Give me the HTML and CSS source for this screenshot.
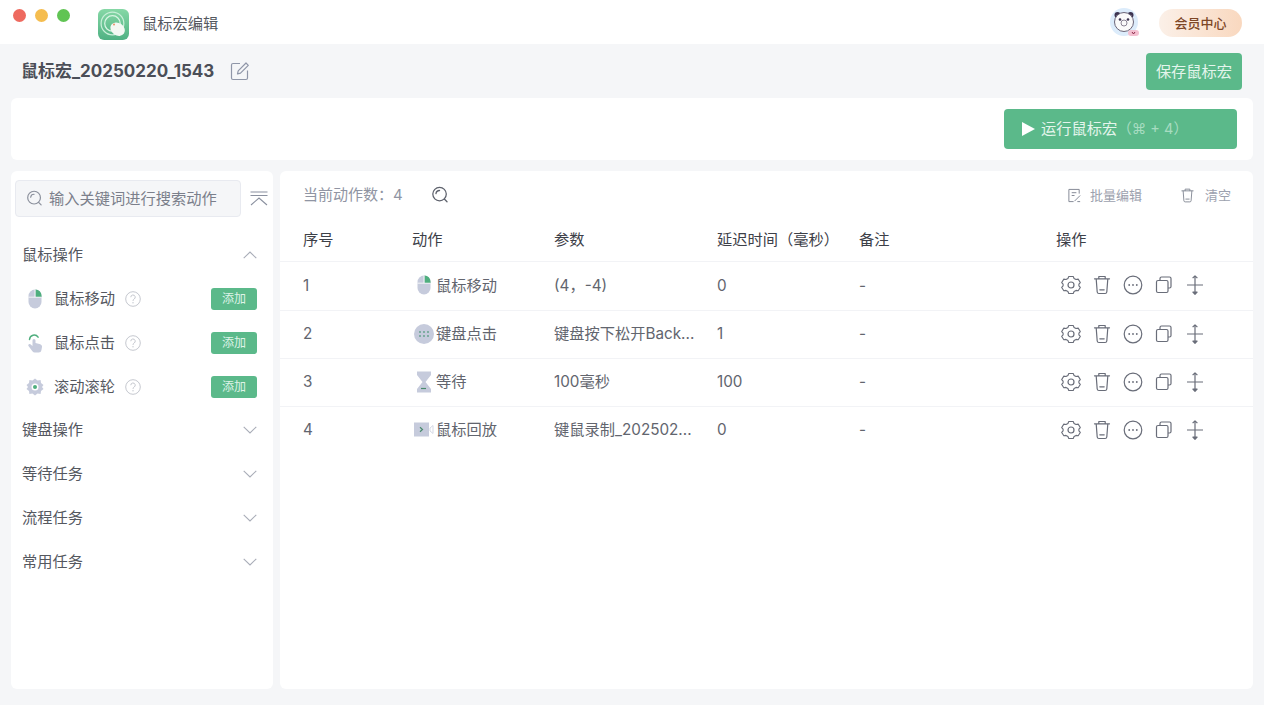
FILE: index.html
```html
<!DOCTYPE html>
<html lang="zh">
<head>
<meta charset="utf-8">
<title>鼠标宏编辑</title>
<link rel="stylesheet" href="styles.css">
</head>
<body>
<svg class="defs" width="0" height="0">
  <symbol id="i-gear" viewBox="0 0 20 20"><path d="M7.600 1.800h4.800l.9 2.100 2.100 1.200 2.300-.4 2.300 3.600-1.500 1.700 0 1.900 1.500 1.700-2.300 3.600-2.300-.4-2.100 1.200-.9 2.100H7.600l-.9-2.100-2.100-1.200-2.300.4L0 13.600l1.500-1.700V10L0 8.300l2.300-3.600 2.300.4 2.100-1.200z" transform="translate(.7 -.2) scale(.93)" fill="none" stroke="currentColor" stroke-width="1.200" stroke-linejoin="round"/><circle cx="10" cy="10" r="3" fill="none" stroke="currentColor" stroke-width="1.200"/></symbol>
  <symbol id="i-trash" viewBox="0 0 20 20"><path d="M2.500 3.800h15M6.800 3.600V1.500h6.400v2.100M4.200 4l1 13a1.700 1.700 0 0 0 1.700 1.500h6.200a1.700 1.700 0 0 0 1.700-1.500l1-13M7.800 14.800h4.400" fill="none" stroke="currentColor" stroke-width="1.200" stroke-linecap="round" stroke-linejoin="round"/></symbol>
  <symbol id="i-more" viewBox="0 0 20 20"><circle cx="10" cy="10" r="8.800" fill="none" stroke="currentColor" stroke-width="1.200"/><circle cx="6.200" cy="10" r=".9" fill="currentColor"/><circle cx="10" cy="10" r=".9" fill="currentColor"/><circle cx="13.800" cy="10" r=".9" fill="currentColor"/></symbol>
  <symbol id="i-copy" viewBox="0 0 20 20"><path d="M6 5V3.500A1.500 1.500 0 0 1 7.500 2h8A1.500 1.500 0 0 1 17 3.500v8a1.500 1.500 0 0 1-1.500 1.500H14" fill="none" stroke="currentColor" stroke-width="1.200"/><rect x="2.500" y="5.500" width="11.500" height="12" rx="1.500" fill="none" stroke="currentColor" stroke-width="1.200"/></symbol>
  <symbol id="i-move" viewBox="0 0 20 20"><path d="M10 .8v18.400M2 10h16M7.600 3.200 10 .8l2.400 2.400M7.900 17.200h4.200L10 19.300z" fill="none" stroke="currentColor" stroke-width="1.200" stroke-linejoin="round"/></symbol>
  <symbol id="i-search" viewBox="0 0 20 20"><circle cx="9.500" cy="9" r="7.500" fill="none" stroke="currentColor" stroke-width="1.400"/><path d="M5.500 8.500a4 4 0 0 1 4-3.500M14.800 14.500l3 3" fill="none" stroke="currentColor" stroke-width="1.400" stroke-linecap="round"/></symbol>
  <symbol id="i-chev" viewBox="0 0 14 8"><path d="M.7.800 7 6.900 13.300.8" fill="none" stroke="currentColor" stroke-width="1.100"/></symbol>
  <symbol id="i-help" viewBox="0 0 16 16"><circle cx="8" cy="8" r="7.300" fill="none" stroke="currentColor"/><path d="M5.800 6.200a2.200 2.200 0 1 1 3.300 1.900c-.8.500-1.100.9-1.100 1.800" fill="none" stroke="currentColor"/><circle cx="8" cy="11.800" r=".7" fill="currentColor"/></symbol>
  <symbol id="i-mouse" viewBox="0 0 14 20"><rect x=".5" y=".5" width="13" height="19" rx="6.500" fill="#c6cbdc"/><path d="M7.500.5h.1a6 6 0 0 1 5.900 6v1.500h-6z" fill="#4fae7e"/><path d="M7 .5v7.700M.5 8.200h13" stroke="#fff" stroke-width=".8"/></symbol>
  <symbol id="i-hand" viewBox="0 0 16 20"><path d="M5.500 7.500a1.500 1.500 0 0 1 3 0V10l4 1c1.800.5 2.800 1.600 2.500 3l-.6 3.200a2.700 2.700 0 0 1-2.600 2.300H7.800a3 3 0 0 1-2.400-1.200L1.500 13c-.9-1.200.7-2.700 1.900-1.700l2.100 1.700z" fill="#c6cbdc"/><path d="M2.500 6.500a4.700 4.700 0 0 1 8.600-2.300" fill="none" stroke="#4fae7e" stroke-width="1.500" stroke-linecap="round"/></symbol>
  <symbol id="i-wheel" viewBox="0 0 18 18"><path d="m9 .5 2.500 1.900 3.100-.3.400 3 2.500 2-1.500 1.900 1.500 1.900-2.500 2-.4 3-3.100-.3L9 17.500l-2.500-1.900-3.100.3-.4-3-2.500-2L2 9 .5 7.100l2.500-2 .4-3 3.100.3z" fill="#c6cbdc"/><circle cx="9" cy="9" r="3.500" fill="#fff"/><circle cx="9" cy="9" r="2" fill="#4fae7e"/></symbol>
  <symbol id="i-keys" viewBox="0 0 20 20"><circle cx="10" cy="10" r="10" fill="#c6cbdc"/><g fill="#5f9f86"><circle cx="6" cy="8" r=".9"/><circle cx="10" cy="8" r=".9"/><circle cx="14" cy="8" r=".9"/><circle cx="6" cy="12" r=".9"/><circle cx="10" cy="12" r=".9"/><circle cx="14" cy="12" r=".9"/></g></symbol>
  <symbol id="i-glass" viewBox="0 0 16 22"><path d="M1 .5h14v3.500L9.500 11 15 18v3.500H1V18l5.500-7L1 4z" fill="#c6cbdc"/><path d="M5 17.500h5" stroke="#4a8a6d" stroke-width="1.200"/></symbol>
  <symbol id="i-video" viewBox="0 0 20 15"><rect y=".5" width="15" height="14" fill="#c6cbdc"/><path d="m6 5.200 2.500 2.300L6 9.800" fill="none" stroke="#4a8a6d" stroke-width="1.200"/><path d="m16 6 3-2.500v8L16 9z" fill="none" stroke="#d5d9e5"/></symbol>
</svg>

<header class="titlebar">
  <div class="lights"><span class="light red"></span><span class="light yellow"></span><span class="light green"></span></div>
  <svg class="applogo" viewBox="0 0 30 30">
    <defs><linearGradient id="lg" x1="0" y1="0" x2="0" y2="1"><stop offset="0" stop-color="#86d8a6"/><stop offset="1" stop-color="#4fb183"/></linearGradient></defs>
    <rect width="30" height="30" rx="6" fill="url(#lg)"/>
    <circle cx="14" cy="14" r="11" fill="none" stroke="#c9efd9" stroke-width="1.200"/>
    <circle cx="14" cy="14" r="7.500" fill="none" stroke="#d9f5e4" stroke-width="1.200"/>
    <ellipse cx="19" cy="19.500" rx="7.500" ry="6" transform="rotate(35 19 19.500)" fill="#f3f8f3"/>
    <circle cx="15.500" cy="15" r="1" fill="#e9946d"/>
  </svg>
  <span class="apptitle">鼠标宏编辑</span>
  <div class="titlebar-right">
    <svg class="avatar" viewBox="0 0 30 30">
      <circle cx="14" cy="14" r="14" fill="#dcecfb"/>
      <circle cx="7.500" cy="7" r="3" fill="#3c3350"/><circle cx="20.500" cy="7" r="3" fill="#3c3350"/>
      <circle cx="14" cy="14" r="9.500" fill="#fafafa" stroke="#6b6578"/>
      <circle cx="10" cy="11.500" r="1.300" fill="#3c3350"/><circle cx="18" cy="11.500" r="1.300" fill="#3c3350"/>
      <circle cx="14" cy="15" r="3" fill="none" stroke="#8a8494"/>
      <rect x="18" y="22" width="11" height="6" rx="3" fill="#f3bfd0"/>
      <path d="m22 24 1.500 2 1.500-2" fill="none" stroke="#8b2a48"/>
    </svg>
    <div class="vip">会员中心</div>
  </div>
</header>

<main class="page">
  <div class="doc-head">
    <div class="doc-title">
      <h1>鼠标宏_20250220_1543</h1>
      <svg class="edit" viewBox="0 0 20 20"><path d="M10 2.500H3A1.500 1.500 0 0 0 1.500 4v13A1.500 1.500 0 0 0 3 18.500h13a1.500 1.500 0 0 0 1.500-1.500V9.500M7.500 13l.7-3.200L16 2l2.300 2.300-7.800 7.800z" fill="none" stroke="#8f96a8" stroke-width="1.200" stroke-linejoin="round"/></svg>
    </div>
    <button class="btn save">保存鼠标宏</button>
  </div>

  <section class="runbar">
    <button class="btn run"><span class="play"></span>运行鼠标宏<span class="shortcut">（⌘ + 4）</span></button>
  </section>

  <div class="workspace">
    <aside class="side">
      <div class="search-row">
        <div class="search"><svg class="ic-search"><use href="#i-search"/></svg><span>输入关键词进行搜索动作</span></div>
        <svg class="collapse" viewBox="0 0 18 16"><path d="M.5 1h17M.5 4.500h17M1 14l8-7 8 7" fill="none" stroke="#8a909f" stroke-width="1.100"/></svg>
      </div>
      <div class="group"><span>鼠标操作</span><svg class="chev up"><use href="#i-chev"/></svg></div>
      <div class="item"><span class="item-ic"><svg class="i-14"><use href="#i-mouse"/></svg></span><span class="item-name">鼠标移动</span><svg class="help"><use href="#i-help"/></svg><span class="add">添加</span></div>
      <div class="item"><span class="item-ic"><svg class="i-16"><use href="#i-hand"/></svg></span><span class="item-name">鼠标点击</span><svg class="help"><use href="#i-help"/></svg><span class="add">添加</span></div>
      <div class="item"><span class="item-ic"><svg class="i-18"><use href="#i-wheel"/></svg></span><span class="item-name">滚动滚轮</span><svg class="help"><use href="#i-help"/></svg><span class="add">添加</span></div>
      <div class="group"><span>键盘操作</span><svg class="chev"><use href="#i-chev"/></svg></div>
      <div class="group"><span>等待任务</span><svg class="chev"><use href="#i-chev"/></svg></div>
      <div class="group"><span>流程任务</span><svg class="chev"><use href="#i-chev"/></svg></div>
      <div class="group"><span>常用任务</span><svg class="chev"><use href="#i-chev"/></svg></div>
    </aside>

    <section class="main">
      <div class="toolbar">
        <span class="count">当前动作数：4</span>
        <svg class="tool-search"><use href="#i-search"/></svg>
        <div class="tools">
          <span class="tool"><svg viewBox="0 0 16 16"><path d="M13 6V1.500H2v13h5M5 5h5M5 8h3M8 14l6-6M11 14.500h3" fill="none" stroke="currentColor"/></svg>批量编辑</span>
          <span class="tool"><svg><use href="#i-trash"/></svg>清空</span>
        </div>
      </div>
      <div class="row head">
        <span>序号</span><span>动作</span><span>参数</span><span>延迟时间（毫秒）</span><span>备注</span><span>操作</span>
      </div>
      <div class="row">
        <span>1</span><span class="act"><i class="act-ic"><svg class="a-mouse"><use href="#i-mouse"/></svg></i>鼠标移动</span><span>(4，-4)</span><span>0</span><span>-</span>
        <span class="ops"><svg><use href="#i-gear"/></svg><svg><use href="#i-trash"/></svg><svg><use href="#i-more"/></svg><svg><use href="#i-copy"/></svg><svg><use href="#i-move"/></svg></span>
      </div>
      <div class="row">
        <span>2</span><span class="act"><i class="act-ic"><svg class="a-keys"><use href="#i-keys"/></svg></i>键盘点击</span><span>键盘按下松开Back...</span><span>1</span><span>-</span>
        <span class="ops"><svg><use href="#i-gear"/></svg><svg><use href="#i-trash"/></svg><svg><use href="#i-more"/></svg><svg><use href="#i-copy"/></svg><svg><use href="#i-move"/></svg></span>
      </div>
      <div class="row">
        <span>3</span><span class="act"><i class="act-ic"><svg class="a-glass"><use href="#i-glass"/></svg></i>等待</span><span>100毫秒</span><span>100</span><span>-</span>
        <span class="ops"><svg><use href="#i-gear"/></svg><svg><use href="#i-trash"/></svg><svg><use href="#i-more"/></svg><svg><use href="#i-copy"/></svg><svg><use href="#i-move"/></svg></span>
      </div>
      <div class="row">
        <span>4</span><span class="act"><i class="act-ic"><svg class="a-video"><use href="#i-video"/></svg></i>鼠标回放</span><span>键鼠录制_202502...</span><span>0</span><span>-</span>
        <span class="ops"><svg><use href="#i-gear"/></svg><svg><use href="#i-trash"/></svg><svg><use href="#i-more"/></svg><svg><use href="#i-copy"/></svg><svg><use href="#i-move"/></svg></span>
      </div>
    </section>
  </div>
</main>
</body>
</html>
```
FILE: styles.css
```css
* { box-sizing: border-box; }
html, body { margin: 0; height: 100%; }
body {
  width: 1264px;
  height: 705px;
  overflow: hidden;
  background: #f5f6f8;
  font-family: "Inter", "Noto Sans CJK SC", sans-serif;
  font-size: 14px;
  line-height: 20px;
  color: #4a4d57;
  display: flex;
  flex-direction: column;
}
.defs { display: block; width: 0; height: 0; overflow: hidden; }

.titlebar {
  height: 44px;
  flex: none;
  background: #fff;
  display: flex;
  align-items: center;
  padding-left: 13px;
  padding-right: 22px;
}
.lights { display: flex; gap: 9px; margin-top: -14px; margin-right: 28px; }
.light { width: 13px; height: 13px; border-radius: 50%; }
.red { background: #ee6a5f; }
.yellow { background: #f5bd4f; }
.green { background: #61c454; }
.applogo { width: 31px; height: 31px; margin-right: 13px; margin-top: 5px; }
.apptitle { font-size: 15.25px; color: #55585f; margin-top: 3px; }
.titlebar-right { margin-left: auto; margin-top: 2px; display: flex; align-items: center; gap: 19px; }
.avatar { width: 30px; height: 30px; }
.vip {
  width: 83px;
  height: 28px;
  border-radius: 14px;
  background: linear-gradient(90deg, #fbf0e8, #f9d8bf);
  color: #7d4626;
  font-size: 13px;
  font-weight: 500;
  display: flex;
  align-items: center;
  justify-content: center;
}

.page { flex: 1; display: flex; flex-direction: column; padding: 0 11px 16px; min-height: 0; }
.doc-head { height: 54px; flex: none; display: flex; align-items: center; justify-content: space-between; padding: 0 11px; }
.doc-title { display: flex; align-items: center; gap: 16px; margin-left: -1px; }
h1 { margin: 0; font-size: 17px; font-weight: 700; color: #4b4e57; }
.edit { width: 20px; height: 20px; }

.btn { border: 0; background: #5bb98a; color: #e4f5ec; font-family: inherit; line-height: 20px; padding: 0; border-radius: 4px; }
.save { width: 96px; height: 37px; font-size: 15.25px; margin-top: 1px; }

.runbar {
  height: 62px;
  flex: none;
  background: #fff;
  border-radius: 6px;
  display: flex;
  align-items: center;
  justify-content: flex-end;
  padding: 0 16px 0 0;
}
.run {
  width: 233px;
  height: 40px;
  font-size: 15.25px;
  display: flex;
  align-items: center;
  padding: 0 0 0 18px;
}
.play { width: 0; height: 0; border-left: 13px solid #fff; border-top: 7.500px solid transparent; border-bottom: 7.500px solid transparent; margin-right: 6px; }
.shortcut { color: #a7dcc1; font-size: 14.500px; }

.workspace { flex: 1; display: flex; gap: 7px; margin-top: 11px; min-height: 0; }

.side { width: 262px; flex: none; background: #fff; border-radius: 6px; padding: 9px 0 0 11px; }
.search-row { display: flex; align-items: center; gap: 9px; margin-left: -7px; margin-bottom: 15.500px; }
.search {
  width: 226px;
  height: 37px;
  background: #f5f6f8;
  border: 1px solid #e8eaf0;
  border-radius: 4px;
  display: flex;
  align-items: center;
  padding-left: 10px;
  gap: 6px;
  color: #7b7f8b;
  font-size: 15.25px;
}
.ic-search { width: 17px; height: 17px; color: #8b909c; }
.collapse { width: 18px; height: 16px; }

.group { height: 44px; display: flex; align-items: center; justify-content: space-between; padding-right: 16px; font-size: 15.25px; color: #55585f; }
.item + .group { margin-top: -1px; }
.chev { width: 14px; height: 8px; color: #a9adb8; }
.chev.up { transform: rotate(180deg); margin-top: 1px; }

.item { height: 44px; display: flex; align-items: center; padding-right: 16px; font-size: 15.25px; color: #55585f; }
.item-ic { width: 22px; display: flex; justify-content: center; margin: 0 8px 0 2px; }
.i-14 { width: 14px; height: 20px; }
.i-16 { width: 16px; height: 20px; }
.i-18 { width: 18px; height: 18px; }
.item-name { width: 71px; }
.help { width: 16px; height: 16px; color: #c5c8cf; }
.add {
  margin-left: auto;
  width: 46px;
  height: 22px;
  border-radius: 3px;
  background: #5bb98a;
  color: #dff3e8;
  font-size: 12px;
  display: flex;
  align-items: center;
  justify-content: center;
}

.main { flex: 1; background: #fff; border-radius: 6px; }
.toolbar { height: 48px; display: flex; align-items: center; padding: 0 22px 0 23px; }
.count { color: #9095a3; font-size: 15px; }
.tool-search { width: 18px; height: 18px; margin-left: 28px; color: #5d616c; }
.tools { margin-left: auto; display: flex; gap: 38px; }
.tool { display: flex; align-items: center; gap: 8px; font-size: 13px; color: #9ca1ae; }
.tool svg { width: 15px; height: 15px; color: #7f8491; }
.tool:last-child { gap: 10px; }

.row {
  display: grid;
  grid-template-columns: 109px 142px 163px 142px 197px 1fr;
  height: 48.100px;
  align-items: center;
  padding-left: 23px;
  border-top: 1px solid #f2f3f6;
  font-size: 15.25px;
  color: #62656e;
}
.head { height: 42.500px; border-top: 0; color: #3d4048; border-bottom: 1px solid #f2f3f6; padding-top: 1px; }
.head + .row { border-top: 0; }
.act { display: flex; align-items: center; }
.act-ic { width: 24px; display: flex; justify-content: center; padding-right: 1px; margin-top: -1px; }
.a-mouse { width: 14px; height: 20px; }
.a-keys { width: 20px; height: 20px; }
.a-glass { width: 16px; height: 22px; }
.a-video { width: 20px; height: 15px; }
.ops { display: flex; gap: 11px; align-items: center; margin: -1px 0 0 5px; }
.ops svg { width: 20px; height: 20px; color: #696d79; }
```
